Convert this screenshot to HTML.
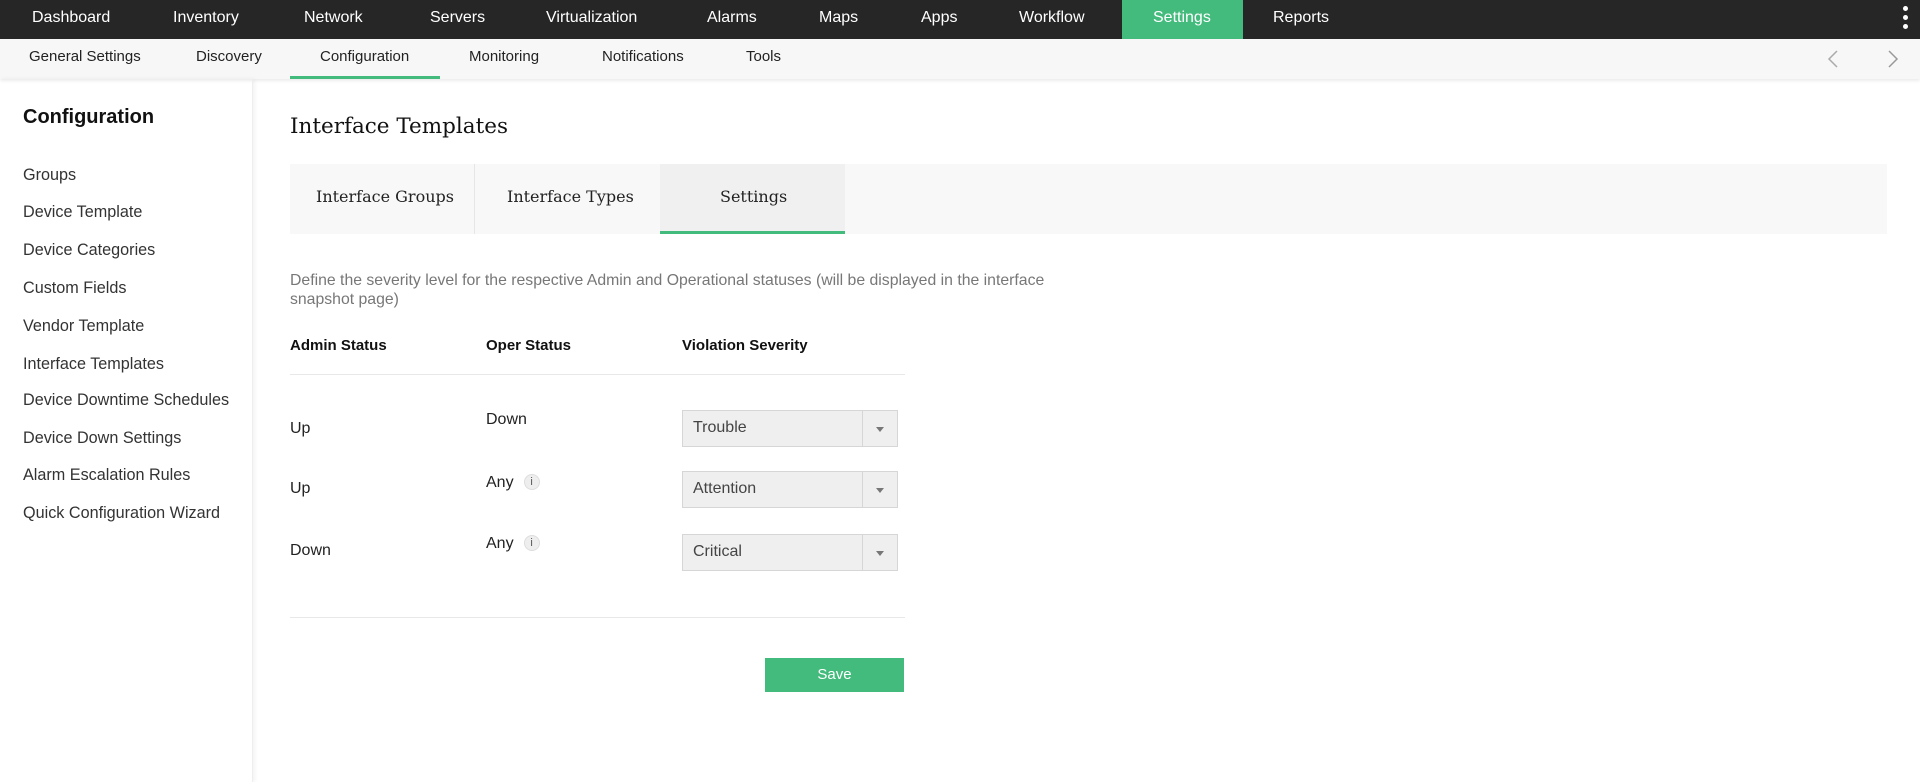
<!DOCTYPE html>
<html><head><meta charset="utf-8"><style>
*{margin:0;padding:0;box-sizing:border-box}
body{width:1920px;height:782px;overflow:hidden;background:#fff;font-family:"Liberation Sans",sans-serif;color:#222;position:relative}
.a{position:absolute;white-space:nowrap}
.nav{left:0;top:0;width:1920px;height:39px;background:#262626}
.nav span{position:absolute;top:9px;color:#fff;font-size:16px}
.sub{left:0;top:39px;width:1920px;height:40px;background:#f7f7f7;box-shadow:0 2px 3px rgba(0,0,0,.08)}
.sub span{position:absolute;top:9px;color:#222;font-size:15px}
.side{left:0;top:79px;width:253px;height:703px;border-right:1px solid #eee;box-shadow:2px 0 4px rgba(0,0,0,.05)}
.si{left:23px;font-size:16.2px;color:#333}
.serif{font-family:"DejaVu Serif","Liberation Serif",serif}
.sel{position:absolute;left:682px;width:216px;height:37px;background:#efefef;border:1px solid #d6d6d6;font-size:16px;color:#444;padding:8px 10px}
.sel:after{content:"";position:absolute;right:0;top:0;width:34px;height:35px;border-left:1px solid #d6d6d6}
.sel i{position:absolute;right:13px;top:16px;border:4px solid transparent;border-top:5px solid #777}
.info{display:inline-block;width:16px;height:16px;border-radius:50%;background:#eee;border:1px solid #ddd;font-size:11px;text-align:center;line-height:14px;color:#555;margin-left:10px;vertical-align:2px}
</style></head><body>
<div class="a nav">
<span style="left:32px">Dashboard</span><span style="left:173px">Inventory</span><span style="left:304px">Network</span><span style="left:430px">Servers</span><span style="left:546px">Virtualization</span><span style="left:707px">Alarms</span><span style="left:819px">Maps</span><span style="left:921px">Apps</span><span style="left:1019px">Workflow</span>
<div style="position:absolute;left:1122px;top:0;width:121px;height:39px;background:#43bb7d"></div>
<span style="left:1153px">Settings</span><span style="left:1273px">Reports</span>
<div style="position:absolute;left:1903px;top:6px;width:5px;height:5px;border-radius:50%;background:#fff;box-shadow:0 9px 0 #fff,0 18px 0 #fff"></div>
</div>
<div class="a sub">
<span style="left:29px">General Settings</span><span style="left:196px">Discovery</span><span style="left:320px">Configuration</span><span style="left:469px">Monitoring</span><span style="left:602px">Notifications</span><span style="left:746px">Tools</span>
<div style="position:absolute;left:290px;top:37px;width:150px;height:3px;background:#43bb7d"></div>
<svg style="position:absolute;left:1826px;top:10px" width="14" height="20"><path d="M11 2L3 10l8 8" stroke="#aaa" stroke-width="1.5" fill="none"/></svg>
<svg style="position:absolute;left:1886px;top:10px" width="14" height="20"><path d="M3 2l8 8-8 8" stroke="#999" stroke-width="1.5" fill="none"/></svg>
</div>
<div class="a side"></div>
<div class="a" style="left:23px;top:106px;font-size:20px;font-weight:bold;color:#111">Configuration</div>
<div class="a si" style="top:166px">Groups</div>
<div class="a si" style="top:203px">Device Template</div>
<div class="a si" style="top:241px">Device Categories</div>
<div class="a si" style="top:279px">Custom Fields</div>
<div class="a si" style="top:317px">Vendor Template</div>
<div class="a si" style="top:355px">Interface Templates</div>
<div class="a si" style="top:391px">Device Downtime Schedules</div>
<div class="a si" style="top:429px">Device Down Settings</div>
<div class="a si" style="top:466px">Alarm Escalation Rules</div>
<div class="a si" style="top:504px">Quick Configuration Wizard</div>
<div class="a serif" style="left:290px;top:114px;font-size:21.5px;color:#111">Interface Templates</div>
<div class="a" style="left:290px;top:164px;width:1597px;height:70px;background:#f8f8f8"></div>
<div class="a" style="left:474px;top:164px;width:1px;height:70px;background:#e6e6e6"></div>
<div class="a" style="left:660px;top:164px;width:185px;height:70px;background:#f0f0f0;border-bottom:3px solid #43bb7d"></div>
<div class="a serif" style="left:316px;top:187px;font-size:16px">Interface Groups</div>
<div class="a serif" style="left:507px;top:187px;font-size:16px">Interface Types</div>
<div class="a serif" style="left:720px;top:187px;font-size:16px">Settings</div>
<div class="a" style="left:290px;top:271px;font-size:15.8px;color:#777;line-height:19px">Define the severity level for the respective Admin and Operational statuses (will be displayed in the interface<br>snapshot page)</div>
<div class="a" style="left:290px;top:337px;font-size:15px;font-weight:bold;color:#111">Admin Status</div>
<div class="a" style="left:486px;top:337px;font-size:15px;font-weight:bold;color:#111">Oper Status</div>
<div class="a" style="left:682px;top:337px;font-size:15px;font-weight:bold;color:#111">Violation Severity</div>
<div class="a" style="left:290px;top:374px;width:615px;height:1px;background:#e8e8e8"></div>
<div class="a" style="left:290px;top:420px;font-size:16px">Up</div>
<div class="a" style="left:486px;top:411px;font-size:16px">Down</div>
<div class="sel" style="top:410px">Trouble<i></i></div>
<div class="a" style="left:290px;top:480px;font-size:16px">Up</div>
<div class="a" style="left:486px;top:474px;font-size:16px">Any<span class="info">i</span></div>
<div class="sel" style="top:471px">Attention<i></i></div>
<div class="a" style="left:290px;top:542px;font-size:16px">Down</div>
<div class="a" style="left:486px;top:535px;font-size:16px">Any<span class="info">i</span></div>
<div class="sel" style="top:534px">Critical<i></i></div>
<div class="a" style="left:290px;top:617px;width:615px;height:1px;background:#e8e8e8"></div>
<div class="a" style="left:765px;top:658px;width:139px;height:34px;background:#43bb7d;color:#fff;font-size:15px;text-align:center;line-height:34px">Save</div>
</body></html>
